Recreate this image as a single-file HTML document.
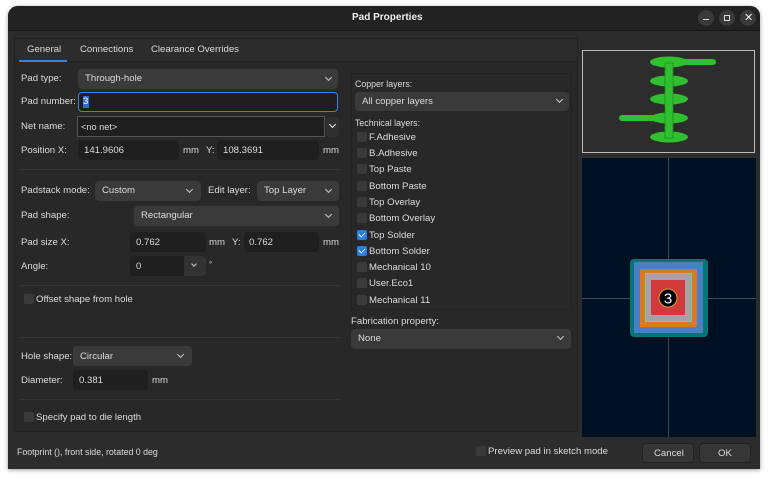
<!DOCTYPE html>
<html><head><meta charset="utf-8"><style>
*{box-sizing:border-box;margin:0;padding:0}
body{width:768px;height:478px;background:#fff;font-family:"Liberation Sans",sans-serif;font-size:9.6px;color:#dcdcdc;position:relative;overflow:hidden}
.a{position:absolute}
.win{left:8px;top:6px;width:752px;height:463px;background:#2c2c2c;border-radius:10px 10px 0 0;box-shadow:0 1px 4px rgba(0,0,0,.4);overflow:hidden}
.tb{left:8px;top:6px;width:752px;height:25px;background:#222;border-radius:10px 10px 0 0;border-bottom:1px solid #151515}
.t{position:absolute;white-space:nowrap;line-height:12px}
.cb{position:absolute;background:#3a3a3a;border-radius:4px}
.in{position:absolute;background:#1f1f1f;border-radius:4px}
.chev{position:absolute;width:5px;height:5px;border-right:1.3px solid #ccc;border-bottom:1.3px solid #ccc;transform:rotate(45deg)}
.ck{position:absolute;width:10px;height:10px;background:#3a3a3a;border-radius:2px;margin-top:-2px}
.ck.on{background:#2a7de1}
.ck.on:after{content:"";position:absolute;left:3px;top:1px;width:3px;height:5px;border-right:1.5px solid #fff;border-bottom:1.5px solid #fff;transform:rotate(45deg)}
.sep{position:absolute;height:1px;background:#333}
.wb{position:absolute;width:16px;height:16px;border-radius:8px;background:#3a3a3a;top:10px}
</style></head><body>
<div class="a win"></div>
<div class="a tb"></div>
<div class="t" style="left:352px;top:12px;font-weight:bold;color:#eee;font-size:10px">Pad Properties</div>
<div class="wb" style="left:698px"><div class="a" style="left:5px;top:9px;width:6px;height:1px;background:#ddd"></div></div>
<div class="wb" style="left:719px"><div class="a" style="left:5px;top:5px;width:6px;height:6px;border:1px solid #ddd"></div></div>
<div class="wb" style="left:740px"><div class="t" style="left:4px;top:2px;font-size:11px;color:#eee">✕</div></div>

<div class="a" style="left:14px;top:38px;width:564px;height:394px;background:#282828;border:1px solid #222"></div>
<div class="a" style="left:15px;top:39px;width:562px;height:23px;background:#2c2c2c;border-bottom:1px solid #202020"></div>
<div class="t" style="left:27px;top:44px">General</div>
<div class="a" style="left:19px;top:60px;width:48px;height:2px;background:#3584e4"></div>
<div class="t" style="left:80px;top:44px">Connections</div>
<div class="t" style="left:151px;top:44px">Clearance Overrides</div>

<div class="t" style="left:21px;top:73px">Pad type:</div>
<div class="cb" style="left:78px;top:69px;width:260px;height:20px"></div>
<div class="t" style="left:85px;top:73px">Through-hole</div><div class="chev" style="left:326px;top:75px"></div>

<div class="t" style="left:21px;top:96px">Pad number:</div>
<div class="in" style="left:78px;top:92px;width:260px;height:20px;border:1.5px solid #3584e4"></div>
<div class="a" style="left:83px;top:96px;width:6px;height:12px;background:#2a6fd0"></div>
<div class="t" style="left:83px;top:96px;color:#fff">3</div>

<div class="t" style="left:21px;top:121px">Net name:</div>
<div class="a" style="left:77px;top:116px;width:248px;height:21px;background:#1f1f1f;border:1px solid #555"></div>
<div class="t" style="left:81px;top:121px;font-size:9.2px">&lt;no net&gt;</div>
<div class="cb" style="left:326px;top:117px;width:13px;height:20px;background:#303030"></div><div class="chev" style="left:330px;top:122px;border-color:#eee"></div>

<div class="t" style="left:21px;top:145px">Position X:</div>
<div class="in" style="left:78px;top:140px;width:101px;height:20px"></div>
<div class="t" style="left:84px;top:145px">141.9606</div>
<div class="t" style="left:183px;top:145px">mm</div>
<div class="t" style="left:206px;top:145px">Y:</div>
<div class="in" style="left:217px;top:140px;width:102px;height:20px"></div>
<div class="t" style="left:223px;top:145px">108.3691</div>
<div class="t" style="left:323px;top:145px">mm</div>
<div class="sep" style="left:19px;top:169px;width:322px"></div>

<div class="t" style="left:21px;top:185px">Padstack mode:</div>
<div class="cb" style="left:95px;top:181px;width:106px;height:20px"></div>
<div class="t" style="left:102px;top:185px">Custom</div><div class="chev" style="left:187px;top:187px"></div>
<div class="t" style="left:208px;top:185px">Edit layer:</div>
<div class="cb" style="left:257px;top:181px;width:82px;height:20px"></div>
<div class="t" style="left:264px;top:185px">Top Layer</div><div class="chev" style="left:326px;top:187px"></div>

<div class="t" style="left:21px;top:210px">Pad shape:</div>
<div class="cb" style="left:134px;top:206px;width:205px;height:20px"></div>
<div class="t" style="left:141px;top:210px">Rectangular</div><div class="chev" style="left:326px;top:212px"></div>

<div class="t" style="left:21px;top:237px">Pad size X:</div>
<div class="in" style="left:130px;top:232px;width:76px;height:20px"></div>
<div class="t" style="left:136px;top:237px">0.762</div>
<div class="t" style="left:209px;top:237px">mm</div>
<div class="t" style="left:232px;top:237px">Y:</div>
<div class="in" style="left:244px;top:232px;width:75px;height:20px"></div>
<div class="t" style="left:249px;top:237px">0.762</div>
<div class="t" style="left:323px;top:237px">mm</div>

<div class="t" style="left:21px;top:261px">Angle:</div>
<div class="in" style="left:130px;top:256px;width:76px;height:20px"></div>
<div class="a" style="left:184px;top:256px;width:22px;height:20px;background:#333;border-radius:0 4px 4px 0"></div>
<div class="chev" style="left:192px;top:262px;width:4px;height:4px"></div>
<div class="t" style="left:136px;top:261px">0</div>
<div class="t" style="left:209px;top:259px;font-size:8px">°</div>
<div class="sep" style="left:19px;top:285px;width:322px"></div>

<div class="ck" style="left:24px;top:296px"></div>
<div class="t" style="left:36px;top:294px">Offset shape from hole</div>
<div class="sep" style="left:19px;top:337px;width:322px"></div>

<div class="t" style="left:21px;top:351px">Hole shape:</div>
<div class="cb" style="left:73px;top:346px;width:119px;height:20px"></div>
<div class="t" style="left:80px;top:351px">Circular</div><div class="chev" style="left:178px;top:352px"></div>
<div class="t" style="left:21px;top:375px">Diameter:</div>
<div class="in" style="left:73px;top:370px;width:75px;height:20px"></div>
<div class="t" style="left:79px;top:375px">0.381</div>
<div class="t" style="left:152px;top:375px">mm</div>
<div class="sep" style="left:19px;top:399px;width:322px"></div>
<div class="ck" style="left:24px;top:414px"></div>
<div class="t" style="left:36px;top:412px">Specify pad to die length</div>

<div class="a" style="left:351px;top:73px;width:221px;height:237px;border:1px solid #222;border-radius:2px"></div>
<div class="t" style="left:355px;top:78px;font-size:8.8px">Copper layers:</div>
<div class="cb" style="left:355px;top:92px;width:214px;height:19px"></div>
<div class="t" style="left:362px;top:96px">All copper layers</div><div class="chev" style="left:557px;top:97px"></div>
<div class="t" style="left:355px;top:117px;font-size:8.8px">Technical layers:</div>
<div class="ck" style="left:357px;top:134px"></div><div class="t" style="left:369px;top:132px">F.Adhesive</div>
<div class="ck" style="left:357px;top:150px"></div><div class="t" style="left:369px;top:148px">B.Adhesive</div>
<div class="ck" style="left:357px;top:166px"></div><div class="t" style="left:369px;top:164px">Top Paste</div>
<div class="ck" style="left:357px;top:183px"></div><div class="t" style="left:369px;top:181px">Bottom Paste</div>
<div class="ck" style="left:357px;top:199px"></div><div class="t" style="left:369px;top:197px">Top Overlay</div>
<div class="ck" style="left:357px;top:215px"></div><div class="t" style="left:369px;top:213px">Bottom Overlay</div>
<div class="ck on" style="left:357px;top:232px"></div><div class="t" style="left:369px;top:230px">Top Solder</div>
<div class="ck on" style="left:357px;top:248px"></div><div class="t" style="left:369px;top:246px">Bottom Solder</div>
<div class="ck" style="left:357px;top:264px"></div><div class="t" style="left:369px;top:262px">Mechanical 10</div>
<div class="ck" style="left:357px;top:280px"></div><div class="t" style="left:369px;top:278px">User.Eco1</div>
<div class="ck" style="left:357px;top:297px"></div><div class="t" style="left:369px;top:295px">Mechanical 11</div>
<div class="t" style="left:351px;top:316px">Fabrication property:</div>
<div class="cb" style="left:351px;top:329px;width:220px;height:20px"></div>
<div class="t" style="left:358px;top:333px">None</div><div class="chev" style="left:558px;top:334px"></div>

<svg class="a" style="left:582px;top:50px" width="174" height="104">
<rect x="0.5" y="0.5" width="172" height="102" fill="#2d2d2d" stroke="#bbb"/>
<g fill="#2fbf2f">
<ellipse cx="87" cy="12" rx="19" ry="5.5"/><rect x="87" y="9" width="47" height="6" rx="3"/>
<ellipse cx="87" cy="31" rx="19" ry="5.5"/>
<ellipse cx="87" cy="49" rx="19" ry="5.5"/>
<ellipse cx="87" cy="68" rx="19" ry="5.5"/><rect x="37" y="65" width="50" height="6" rx="3"/>
<ellipse cx="87" cy="87" rx="19" ry="5.5"/>
</g>
<rect x="83" y="13" width="8" height="75" fill="#2fbf2f" stroke="#1f8f1f" stroke-width="0.8"/>
</svg>
<svg class="a" style="left:582px;top:158px" width="174" height="279">
<rect width="174" height="279" fill="#001023"/>
<line x1="86.5" y1="0" x2="86.5" y2="279" stroke="#3a4a5a"/>
<line x1="0" y1="140.5" x2="174" y2="140.5" stroke="#3a4a5a"/>
<rect x="48" y="101" width="78" height="78" rx="4" fill="#087575"/>
<rect x="52" y="104" width="69" height="71" fill="#4a7fc8"/>
<rect x="58" y="111" width="57" height="58" fill="#d67a26"/>
<rect x="63" y="115" width="47" height="49" fill="#7bd07b"/>
<rect x="64" y="116" width="45" height="47" fill="#a6a2ac"/>
<rect x="69" y="122" width="34" height="35" fill="#d03a3a"/>
<circle cx="86" cy="140" r="9" fill="#000" stroke="#e0a030"/>
<text x="86" y="145.5" text-anchor="middle" font-family="Liberation Sans" font-size="15" fill="#fff">3</text>
</svg>

<div class="t" style="left:17px;top:446px;font-size:8.8px">Footprint  (), front side, rotated 0 deg</div>
<div class="ck" style="left:476px;top:448px"></div>
<div class="t" style="left:488px;top:446px">Preview pad in sketch mode</div>
<div class="a" style="left:642px;top:443px;width:52px;height:20px;background:#363636;border:1px solid #222;border-radius:4px"></div>
<div class="t" style="left:654px;top:448px">Cancel</div>
<div class="a" style="left:699px;top:443px;width:52px;height:20px;background:#363636;border:1px solid #222;border-radius:4px"></div>
<div class="t" style="left:718px;top:448px">OK</div>
</body></html>
